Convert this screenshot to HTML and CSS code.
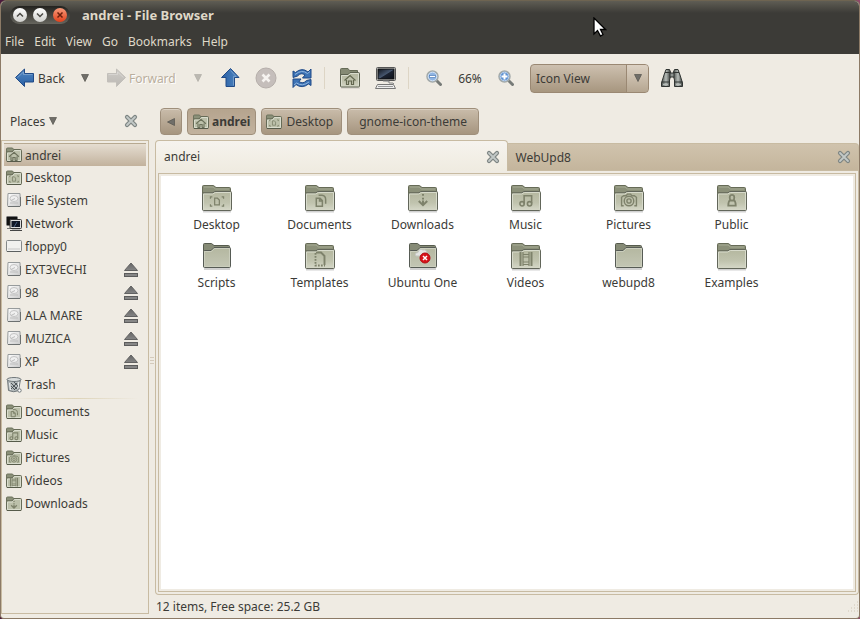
FILE: index.html
```
<!DOCTYPE html>
<html lang="en">
<head>
<meta charset="utf-8">
<title>andrei - File Browser</title>
<link rel="stylesheet" href="styles.css">
</head>
<body>
<svg class="defs" aria-hidden="true">
  <defs>
    <linearGradient id="g-front" x1="0" y1="0" x2="0" y2="1"><stop offset="0" stop-color="#b4b79f"/><stop offset=".6" stop-color="#c0c3ae"/><stop offset="1" stop-color="#d6d8c8"/></linearGradient>
    <linearGradient id="g-plain" x1="0" y1="0" x2="0" y2="1"><stop offset="0" stop-color="#b4b7a0"/><stop offset="1" stop-color="#c3c6b4"/></linearGradient>
    <linearGradient id="g-blue" x1="0" y1="0" x2="0" y2="1"><stop offset="0" stop-color="#5088c4"/><stop offset="1" stop-color="#2a5fa3"/></linearGradient>
    <linearGradient id="g-gray" x1="0" y1="0" x2="0" y2="1"><stop offset="0" stop-color="#cfccc7"/><stop offset="1" stop-color="#bbb8b4"/></linearGradient>
    <linearGradient id="g-eject" x1="0" y1="0" x2="0" y2="1"><stop offset="0" stop-color="#666"/><stop offset="1" stop-color="#858585"/></linearGradient>
    <linearGradient id="g-drive" x1="0" y1="0" x2="1" y2="1"><stop offset="0" stop-color="#fff"/><stop offset="1" stop-color="#c9c9c9"/></linearGradient>
    <linearGradient id="g-screen" x1="0" y1="0" x2="1" y2="1"><stop offset="0" stop-color="#10141c"/><stop offset=".5" stop-color="#46566e"/><stop offset=".55" stop-color="#1b2230"/><stop offset="1" stop-color="#0c1018"/></linearGradient>
    <linearGradient id="g-bino" x1="0" y1="0" x2="1" y2="0"><stop offset="0" stop-color="#4c514e"/><stop offset=".5" stop-color="#b6bcb8"/><stop offset="1" stop-color="#3a3e3c"/></linearGradient>
  </defs>
  <symbol id="folder" viewBox="0 0 32 28">
    <path d="M2 26.5h28" stroke="#000" stroke-opacity=".18" stroke-width="2"/>
    <path d="M1.500 25V1.500Q1.500.5 2.500.5H12.500L15 2.500H28.500Q29.500 2.500 29.500 3.500V8H1.500z" fill="#8b9079" stroke="#666b57"/>
    <path d="M3 2h9l2.500 2H28" fill="none" stroke="#a5aa94"/>
    <path d="M1.500 24.500V9Q1.500 8 2.500 8H11Q12 8 13 7L14 6.500H29.500Q30.500 6.500 30.500 7.500V24.500Q30.500 25.500 29.500 25.500H2.500Q1.500 25.500 1.500 24.500z" fill="url(#g-front)" stroke="#62665a"/>
    <path d="M2.500 24V9H11.500L14.500 7.500H29.500V24" fill="none" stroke="#d7dacb"/>
  </symbol>
  <symbol id="folder-plain" viewBox="0 0 32 28">
    <path d="M3 26h26" stroke="#000" stroke-opacity=".18" stroke-width="2"/>
    <path d="M2.500 24V1.500Q2.500.5 3.500.5H10.500L13 2.500H27.500Q28.500 2.500 28.500 3.500V8H2.500z" fill="#868b76" stroke="#565b4e"/>
    <path d="M2.500 23.500V8.500Q2.500 7.500 3.500 7.500H10L13 4.500H28.500Q29.500 4.500 29.500 5.500V23.500Q29.500 24.500 28.500 24.500H3.500Q2.500 24.500 2.500 23.500z" fill="url(#g-plain)" stroke="#565b55"/>
    <path d="M3.500 23.500V8.500H10.500L13.500 5.500H28.500V23.500z" fill="none" stroke="#cbcebd"/>
  </symbol>
  <symbol id="mini" viewBox="0 0 16 16">
    <path d="M.5 13V2Q.5 1 1.500 1H6.500L8 3V5H.5z" fill="#8b9079" stroke="#6d725d"/>
    <path d="M.5 13.500V6Q.5 5 1.500 5H6L8 2.500H14.500Q15.500 2.500 15.500 3.500V13.500Q15.500 14.500 14.500 14.500H1.500Q.5 14.500.5 13.500z" fill="#bcc0aa" stroke="#666b57"/>
    <path d="M1.500 13.500V6H6.500L8.500 3.500H14.500V13.500z" fill="none" stroke="#d9dccd"/>
    <path d="M1 14.500h14" stroke="#565b4a"/>
  </symbol>
  <symbol id="e-home" viewBox="0 0 16 16"><path d="M1.500 9L8 3L14.500 9M4 8.500V14H6.500V10H9.500V14H12V8.500" fill="none" stroke="#6d725c" stroke-width="1.500"/></symbol>
  <symbol id="e-desktop" viewBox="0 0 16 16"><path d="M5.500 4.500H8.500L10.500 6.500V11.500H5.500zM1 5V3H3M13 3H15V5M1 11V13H3M13 13H15V11" fill="none" stroke="#7e826b" stroke-width="1.300"/></symbol>
  <symbol id="e-docs" viewBox="0 0 16 16"><path d="M3.500 5.500H7.500L10 8V14H3.500zM6 2.500H9.500Q13.500 3 13.500 7V11.500M7 6V8.500H9.500" fill="none" stroke="#7e826b" stroke-width="1.600"/></symbol>
  <symbol id="e-down" viewBox="0 0 16 16"><path d="M8 1v2M8 5v2M8 8v4M3.500 8.500L8 13L12.500 8.500" fill="none" stroke="#7e826b" stroke-width="2.100"/></symbol>
  <symbol id="e-music" viewBox="0 0 16 16"><path d="M6 11.500V3H14V11" fill="none" stroke="#7e826b" stroke-width="1.700"/><circle cx="3.800" cy="11.500" r="2.300" fill="none" stroke="#7e826b" stroke-width="1.700"/><circle cx="11.800" cy="11.500" r="2.300" fill="none" stroke="#7e826b" stroke-width="1.700"/></symbol>
  <symbol id="e-pics" viewBox="0 0 16 16"><g fill="none" stroke="#7e826b" stroke-width="1.300"><path d="M3 13H1V5L3 3.500H5.500L6.500 2H9.500L10.500 3.500H13L15 5V13H13"/><circle cx="8" cy="8.500" r="4.500"/><circle cx="8" cy="8.500" r="2"/></g></symbol>
  <symbol id="e-public" viewBox="0 0 16 16"><path d="M6 7.500Q4.500 2 8 2Q11.500 2 10 7.500Q12 9 12 13.500H4Q4 9 6 7.500zM6 8h4" fill="none" stroke="#7e826b" stroke-width="1.900"/></symbol>
  <symbol id="e-templates" viewBox="0 0 16 16"><path d="M4 1.500H9L12.500 5V14" fill="none" stroke="#7e826b" stroke-width="1.900"/><path d="M3.500 2V14.500H13" fill="none" stroke="#7e826b" stroke-width="1.800" stroke-dasharray="1.700 1.300"/></symbol>
  <symbol id="e-videos" viewBox="0 0 16 16"><path d="M2.500 1V15M13.500 1V15" stroke="#7e826b" stroke-width="2"/><path d="M5 1V15M11 1V15M5 3.500H11M5 6H11M5 11H11M5 13.500H11" stroke="#7e826b" stroke-width="1.200"/></symbol>
  <symbol id="drive" viewBox="0 0 16 16">
    <path d="M2 .5H14L14.500 12.500Q14.500 13.500 13.500 13.500H2.500Q1.500 13.500 1.500 12.500z" fill="url(#g-drive)" stroke="#979b9c"/>
    <path d="M2 13.500H14M14.500 4V13" stroke="#6c7070"/>
    <ellipse cx="8" cy="5.500" rx="4" ry="3" fill="#f0f0f0" stroke="#c5c5c5"/><path d="M5 7.500L9 5.500M4 10H12" stroke="#bdbdbd"/>
  </symbol>
  <symbol id="floppy" viewBox="0 0 16 16"><rect x=".5" y="1.500" width="15" height="11" rx="1" fill="#f1f1ef" stroke="#85898a"/><path d="M2 10H14" stroke="#c7c7c7"/><path d="M1 12.500H15" stroke="#5c6060"/></symbol>
  <symbol id="network" viewBox="0 0 16 16"><rect x=".5" y=".5" width="11" height="9" rx="1" fill="#111" stroke="#777"/><path d="M1 12.500h6" stroke="#777"/><rect x="4" y="3.500" width="11.500" height="9" rx="1" fill="#ddd" stroke="#333"/><rect x="5.500" y="5" width="8.500" height="6" fill="#111827"/><path d="M8 11l3-5" stroke="#496080"/><path d="M4 14.500H16" stroke="#444"/><path d="M6 13.500H14" stroke="#bbb"/></symbol>
  <symbol id="trash" viewBox="0 0 16 16"><path d="M1.500 2.500L2.500 13.500Q8 16 12.500 13.500L14.500 2.500z" fill="#b4babb" stroke="#70777a"/><ellipse cx="8" cy="2.500" rx="7" ry="2" fill="#d9dddd" stroke="#70777a"/><path d="M5 6L11 12M5 9L9 13M8 5L12 9M11 6L5 12M12 9L8 13" stroke="#454c50" stroke-width=".9"/><path d="M3.500 6L4.500 13M12.800 5L12 12" stroke="#eef1f2"/><circle cx="13.500" cy="13.500" r="1.700" fill="#fff" stroke="#70777a"/></symbol>
  <symbol id="eject" viewBox="0 0 16 16"><path d="M8 1L14.500 8.500H1.500z" fill="url(#g-eject)" stroke="#626262"/><rect x="1.500" y="11.500" width="13" height="3" fill="#868686" stroke="#5c5c5c"/></symbol>
  <symbol id="cross" viewBox="0 0 14 14"><path d="M3 3L11 11M11 3L3 11" stroke="#7d8583" stroke-width="4.200" stroke-linecap="round"/><path d="M3 3L11 11M11 3L3 11" stroke="#c3c9c7" stroke-width="1.800" stroke-linecap="round"/></symbol>
  <symbol id="arrow-left" viewBox="0 0 22 22"><path d="M1.500 10.500L10.500 2V6.500H19.500V15H10.500V19.500z" stroke-linejoin="round"/><path d="M3.500 10.500L9.500 5V7.500H18.500" fill="none" stroke="#fff" stroke-opacity=".25"/></symbol>
  <symbol id="down" viewBox="0 0 10 10"><path d="M1.500 1.500H8.500L5 8.500z" fill="#706e69" stroke="#55534e" stroke-width=".7"/></symbol>
</svg>

<div class="window">
  <header class="chrome">
    <div class="titlebar">
      <div class="wm">
        <button class="orb" aria-label="Minimize"><svg viewBox="0 0 14 14"><path d="M4 8.500L7 5.500L10 8.500"/></svg></button>
        <button class="orb" aria-label="Maximize"><svg viewBox="0 0 14 14"><path d="M4 5.500L7 8.500L10 5.500"/></svg></button>
        <button class="orb orb-close" aria-label="Close"><svg viewBox="0 0 14 14"><path d="M4.500 4.500L9.500 9.500M9.500 4.500L4.500 9.500"/></svg></button>
      </div>
      <h1>andrei - File Browser</h1>
    </div>
    <nav class="menubar">
      <button>File</button><button>Edit</button><button>View</button><button>Go</button><button>Bookmarks</button><button>Help</button>
    </nav>
  </header>

  <div class="toolbar">
    <button class="tool back"><svg class="i22 blue"><use href="#arrow-left"/></svg>Back</button>
    <button class="drop" aria-label="Back history"><svg class="i10"><use href="#down"/></svg></button>
    <button class="tool forward" disabled><svg class="i22 gray"><use href="#arrow-left"/></svg><span>Forward</span></button>
    <button class="drop faded" disabled aria-label="Forward history"><svg class="i10"><use href="#down"/></svg></button>
    <button class="icon" aria-label="Up"><svg class="i22 blue turn"><use href="#arrow-left"/></svg></button>
    <button class="icon" disabled aria-label="Stop"><svg class="i22" viewBox="0 0 22 22"><circle cx="11" cy="11" r="10" fill="#c5bebb" stroke="#b5aeaa"/><path d="M7.500 7.500L14.500 14.500M14.500 7.500L7.500 14.500" stroke="#f6f3f0" stroke-width="2.600"/></svg></button>
    <button class="icon" aria-label="Reload"><svg class="i22" viewBox="0 0 22 22"><path d="M2 9.500V4L4.500 5.500Q11 0 17 5L20 2V11H11.500L14 8Q10 5 6.500 9L2 10.500z" fill="#3d73b5" stroke="#204a87"/><path d="M20 12.500V18.500L17.500 17Q11 22 5 17.500L2 20.500V12H10L8 14.500Q12 17.500 15.500 13.500z" fill="#3d73b5" stroke="#204a87"/><path d="M4 7.500Q11 2 16.500 6.500L19 4.500M18 15Q11 20 5.500 16L3 18" fill="none" stroke="#8fb4de"/></svg></button>
    <span class="sep"></span>
    <button class="icon" aria-label="Home"><svg class="i22" viewBox="0 0 22 22"><path d="M2 21h19" stroke="#000" stroke-opacity=".15"/><path d="M1.500 18V2.500Q1.500 1.500 2.500 1.500H9L10.500 3.500H18.500V8H1.500z" fill="#858a74" stroke="#666b57"/><path d="M1.500 19V7.500H9L11 5.500H19.500Q20.500 5.500 20.500 6.500V19Q20.500 20 19.500 20H2.500Q1.500 20 1.500 19z" fill="url(#g-front)" stroke="#5d6250"/><path d="M2.500 18.500V8.500H9.500L11.500 6.500H19.500V18.500" fill="none" stroke="#d9dccd"/><path d="M5.500 13.500L11 8.500L16.500 13.500M7.500 13V17.500H9.500V14H12.500V17.500H14.500V13" fill="none" stroke="#62674f" stroke-width="1.200"/></svg></button>
    <button class="icon" aria-label="Computer"><svg class="i22" viewBox="0 0 22 22"><rect x="1.500" y=".5" width="19" height="13" rx="1" fill="#e2e2df" stroke="#555"/><rect x="3" y="2" width="16" height="10" fill="url(#g-screen)" stroke="#111"/><path d="M8 14H14V16H18L19 17" fill="#ccc" stroke="#888"/><path d="M2.500 17.500H18.500L20.500 21.500H.5z" fill="#eee" stroke="#777"/><path d="M3 19.500H18" stroke="#999"/></svg></button>
    <span class="sep"></span>
    <button class="icon" aria-label="Zoom out"><svg class="i16" viewBox="0 0 16 16"><path d="M10.500 10.500L14.500 14.500" stroke="#777b78" stroke-width="3" stroke-linecap="round"/><circle cx="6.500" cy="6.500" r="5.500" fill="#8fb4e2" stroke="#a4aaa9" stroke-width="1.500"/><circle cx="6.500" cy="6.500" r="4.300" fill="none" stroke="#d4e2f3"/><rect x="3.500" y="5.500" width="6" height="2" fill="#fff" stroke="#4f7db8" stroke-width=".7"/></svg></button>
    <span class="zoom">66%</span>
    <button class="icon" aria-label="Zoom in"><svg class="i16" viewBox="0 0 16 16"><path d="M10.500 10.500L14.500 14.500" stroke="#777b78" stroke-width="3" stroke-linecap="round"/><circle cx="6.500" cy="6.500" r="5.500" fill="#5d90d0" stroke="#a4aaa9" stroke-width="1.500"/><circle cx="6.500" cy="6.500" r="4.300" fill="none" stroke="#c0d5ee"/><path d="M3.500 6.500H9.500M6.500 3.500V9.500" stroke="#fff" stroke-width="2"/></svg></button>
    <div class="combo">
      <select aria-label="View mode"><option>Icon View</option><option>List View</option><option>Compact View</option></select>
      <span class="combo-arrow"><svg class="i10"><use href="#down"/></svg></span>
    </div>
    <button class="icon" aria-label="Search"><svg class="bino" viewBox="0 0 24 20"><path d="M6 1.500H9.500L10.500 4V8.500L9.500 12V18.500H1.500V15L4 7z" fill="url(#g-bino)" stroke="#303432"/><path d="M18 1.500H14.500L13.500 4V8.500L14.500 12V18.500H22.500V15L20 7z" fill="url(#g-bino)" stroke="#303432"/><rect x="10" y="5" width="4" height="4" fill="#8d9390" stroke="#303432"/><path d="M1.500 14H9.500M14.500 14H22.500M5 4.500H10M14 4.500H19" stroke="#303432"/><path d="M3 16.500H8M16 16.500H21" stroke="#b5bab7"/></svg></button>
  </div>

  <div class="body">
    <aside class="side">
      <div class="side-head"><button class="places">Places<svg class="i10"><use href="#down"/></svg></button><button class="x" aria-label="Close side pane"><svg class="i14"><use href="#cross"/></svg></button></div>
      <ul class="list">
        <li class="sel"><a href="#"><svg class="i16" viewBox="0 0 16 16"><use href="#mini"/><use href="#e-home" x="2" y="3" width="12" height="12"/></svg>andrei</a></li>
        <li><a href="#"><svg class="i16" viewBox="0 0 16 16"><use href="#mini"/><use href="#e-desktop" x="3" y="4" width="10" height="10"/></svg>Desktop</a></li>
        <li><a href="#"><svg class="i16"><use href="#drive"/></svg>File System</a></li>
        <li><a href="#"><svg class="i16"><use href="#network"/></svg>Network</a></li>
        <li><a href="#"><svg class="i16"><use href="#floppy"/></svg>floppy0</a></li>
        <li><a href="#"><svg class="i16"><use href="#drive"/></svg>EXT3VECHI</a><button class="x" aria-label="Eject EXT3VECHI"><svg class="i16"><use href="#eject"/></svg></button></li>
        <li><a href="#"><svg class="i16"><use href="#drive"/></svg>98</a><button class="x" aria-label="Eject 98"><svg class="i16"><use href="#eject"/></svg></button></li>
        <li><a href="#"><svg class="i16"><use href="#drive"/></svg>ALA MARE</a><button class="x" aria-label="Eject ALA MARE"><svg class="i16"><use href="#eject"/></svg></button></li>
        <li><a href="#"><svg class="i16"><use href="#drive"/></svg>MUZICA</a><button class="x" aria-label="Eject MUZICA"><svg class="i16"><use href="#eject"/></svg></button></li>
        <li><a href="#"><svg class="i16"><use href="#drive"/></svg>XP</a><button class="x" aria-label="Eject XP"><svg class="i16"><use href="#eject"/></svg></button></li>
        <li><a href="#"><svg class="i16"><use href="#trash"/></svg>Trash</a></li>
        <li class="rule" role="separator"></li>
        <li><a href="#"><svg class="i16" viewBox="0 0 16 16"><use href="#mini"/><use href="#e-docs" x="3" y="4" width="10" height="10"/></svg>Documents</a></li>
        <li><a href="#"><svg class="i16" viewBox="0 0 16 16"><use href="#mini"/><use href="#e-music" x="3" y="4" width="10" height="10"/></svg>Music</a></li>
        <li><a href="#"><svg class="i16" viewBox="0 0 16 16"><use href="#mini"/><use href="#e-pics" x="3" y="4" width="10" height="10"/></svg>Pictures</a></li>
        <li><a href="#"><svg class="i16" viewBox="0 0 16 16"><use href="#mini"/><use href="#e-videos" x="3" y="4" width="10" height="10"/></svg>Videos</a></li>
        <li><a href="#"><svg class="i16" viewBox="0 0 16 16"><use href="#mini"/><use href="#e-down" x="3" y="4" width="10" height="10"/></svg>Downloads</a></li>
      </ul>
    </aside>
    <div class="splitter"><i></i><i></i><i></i></div>
    <main class="main">
      <nav class="path">
        <button class="crumb step" aria-label="Previous"><svg class="i10 point"><use href="#down"/></svg></button>
        <button class="crumb current"><svg class="i16" viewBox="0 0 16 16"><use href="#mini"/><use href="#e-home" x="2" y="3" width="12" height="12"/></svg>andrei</button>
        <button class="crumb"><svg class="i16" viewBox="0 0 16 16"><use href="#mini"/><use href="#e-desktop" x="3" y="4" width="10" height="10"/></svg><span>Desktop</span></button>
        <button class="crumb wide">gnome-icon-theme</button>
      </nav>
      <div class="tabs">
        <div class="tab on"><button class="tab-name">andrei</button><button class="x" aria-label="Close tab andrei"><svg class="i14"><use href="#cross"/></svg></button></div>
        <div class="tab"><button class="tab-name">WebUpd8</button><button class="x" aria-label="Close tab WebUpd8"><svg class="i14"><use href="#cross"/></svg></button></div>
      </div>
      <div class="frame">
        <div class="view">
          <a class="file" href="#"><svg viewBox="0 0 32 28"><use href="#folder"/><use href="#e-desktop" x="8" y="9" width="16" height="15"/></svg>Desktop</a>
          <a class="file" href="#"><svg viewBox="0 0 32 28"><use href="#folder"/><use href="#e-docs" x="9" y="8" width="15" height="15"/></svg>Documents</a>
          <a class="file" href="#"><svg viewBox="0 0 32 28"><use href="#folder"/><use href="#e-down" x="8" y="8" width="16" height="15"/></svg>Downloads</a>
          <a class="file" href="#"><svg viewBox="0 0 32 28"><use href="#folder"/><use href="#e-music" x="8" y="8" width="16" height="15"/></svg>Music</a>
          <a class="file" href="#"><svg viewBox="0 0 32 28"><use href="#folder"/><use href="#e-pics" x="7" y="7" width="18" height="17"/></svg>Pictures</a>
          <a class="file" href="#"><svg viewBox="0 0 32 28"><use href="#folder"/><use href="#e-public" x="8" y="8" width="16" height="15"/></svg>Public</a>
          <a class="file" href="#"><svg viewBox="0 0 32 28"><use href="#folder-plain"/></svg>Scripts</a>
          <a class="file" href="#"><svg viewBox="0 0 32 28"><use href="#folder"/><use href="#e-templates" x="8" y="8" width="16" height="16"/></svg>Templates</a>
          <a class="file" href="#"><svg viewBox="0 0 32 28"><use href="#folder-plain"/><path d="M9 13Q7 10 11 9.500Q12 5 16 7Q20 6 20 11V13z" fill="#e4e5e3" stroke="#c3c5c1"/><circle cx="18" cy="15" r="5" fill="#d8121a" stroke="#b20a10"/><path d="M16 13L20 17M20 13L16 17" stroke="#fff" stroke-width="1.500"/></svg>Ubuntu One</a>
          <a class="file" href="#"><svg viewBox="0 0 32 28"><use href="#folder"/><use href="#e-videos" x="8" y="8" width="16" height="16"/></svg>Videos</a>
          <a class="file" href="#"><svg viewBox="0 0 32 28"><use href="#folder-plain"/></svg>webupd8</a>
          <a class="file" href="#"><svg viewBox="0 0 32 28"><use href="#folder"/></svg>Examples</a>
        </div>
      </div>
      <footer class="status"><span>12 items, Free space: 25.2 GB</span><svg class="grip" viewBox="0 0 12 12"><path d="M10 1h1M7 4h1M10 4h1M4 7h1M7 7h1M10 7h1M1 10h1M4 10h1M7 10h1M10 10h1" stroke="#cfc5b4"/></svg></footer>
    </main>
  </div>
  <svg class="pointer" viewBox="0 0 14 20" aria-hidden="true"><path d="M1 1V17L4.500 13.500L7.500 19L10 17.500L7.500 12.500H12.500z" fill="#fff" stroke="#000" stroke-width="1.300"/></svg>
</div>
</body>
</html>
```
FILE: styles.css
```
* { box-sizing: border-box; }

body {
  margin: 0;
  background: linear-gradient(90deg, #4a1a3c, #8f4a6a);
  font: 12px/17px "Noto Sans", sans-serif;
  color: #3c3b37;
}

button, select {
  font: inherit;
  color: inherit;
  background: none;
  border: 0;
  padding: 0;
  margin: 0;
}

a { color: inherit; text-decoration: none; }
svg { display: block; flex: none; }
.defs { position: absolute; width: 0; height: 0; }

.i10 { width: 10px; height: 10px; }
.i14 { width: 14px; height: 14px; }
.i16 { width: 16px; height: 16px; }
.i22 { width: 22px; height: 22px; }
.bino { width: 24px; height: 20px; }
.blue { fill: url(#g-blue); stroke: #204a87; }
.gray { fill: url(#g-gray); stroke: #c2bfba; transform: scaleX(-1); }
.turn { transform: rotate(90deg); }

.window {
  position: relative;
  display: flex;
  flex-direction: column;
  min-height: 100vh;
  border: 1px solid #8c7a66;
  border-top-color: #6e6451;
  border-radius: 6px 6px 4px 4px;
  background: #efebe3;
  overflow: hidden;
}

.chrome {
  background: linear-gradient(#5f5d54, #3c3b37 12px);
  color: #dfd8c8;
  height: 53px;
}

.titlebar { display: flex; align-items: center; height: 28px; padding-left: 9px; }
.titlebar h1 { margin: 0 0 0 12px; font-size: 13px; font-weight: 700; }

.wm {
  display: flex;
  align-items: center;
  gap: 6px;
  height: 18px;
  padding: 0 3px;
  border-radius: 9px;
  background: linear-gradient(#23221f, #66655e);
}

.orb {
  width: 14px;
  height: 14px;
  border-radius: 50%;
  background: linear-gradient(#fff, #cfcfcc);
}
.orb svg { fill: none; stroke: #4a4945; stroke-width: 1.5px; }
.orb-close { background: linear-gradient(#f79a7a, #e2401a); }
.orb-close svg { stroke: #6b1f0c; }

.menubar { display: flex; gap: 10px; height: 25px; padding-left: 4px; }

.toolbar { display: flex; align-items: center; height: 48px; padding-left: 13px; }
.tool { display: flex; align-items: center; gap: 2px; height: 30px; }
.back { width: 56px; }
.forward { width: 78px; margin-left: 6px; color: #b9ae9d; text-shadow: 1px 1px #fff; }
.drop { display: flex; justify-content: center; width: 29px; }
.faded { opacity: .4; }
.icon { display: flex; align-items: center; justify-content: center; width: 36px; height: 30px; }
.sep { width: 1px; height: 22px; margin: 0 7px 0 4px; background: #ddd5c5; }
.zoom { width: 36px; text-align: center; }

.combo { position: relative; width: 119px; height: 29px; margin: 0 5px 0 6px; }
.combo select {
  appearance: none;
  width: 100%;
  height: 100%;
  padding-left: 5px;
  border: 1px solid #9a8873;
  border-radius: 4px;
  background: linear-gradient(#cdc0af, #a7967f);
}
.combo-arrow {
  position: absolute;
  top: 1px;
  right: 1px;
  bottom: 1px;
  display: flex;
  align-items: center;
  justify-content: center;
  width: 22px;
  border-left: 1px solid #9a8873;
  border-radius: 0 3px 3px 0;
  background: linear-gradient(#ddd2c4, #b5a691);
  pointer-events: none;
}

.body { display: flex; flex: 1; }

.side { display: flex; flex-direction: column; width: 148px; padding-bottom: 4px; }
.side-head {
  display: flex;
  align-items: center;
  justify-content: space-between;
  height: 38px;
  padding: 0 11px 0 9px;
}
.places { display: flex; align-items: center; gap: 3px; }

.list {
  flex: 1;
  margin: 0;
  padding: 2px;
  list-style: none;
  border: 1px solid #c8bba2;
}
.list li { display: flex; align-items: center; height: 23px; padding: 0 7px 0 2px; }
.list a { display: flex; flex: 1; align-items: center; gap: 3px; }
.list .sel { border-top: 1px solid #b7a991; background: linear-gradient(#e5ddd1, #c2b29d); }
.list .rule { height: 4px; background: linear-gradient(90deg, #efebe3, #ddd3b8, #efebe3) center / 90% 1px no-repeat; }

.splitter {
  display: flex;
  flex-direction: column;
  align-items: center;
  justify-content: center;
  gap: 2px;
  width: 6px;
}
.splitter i { width: 4px; height: 1px; background: #d4cabb; }

.main { display: flex; flex: 1; flex-direction: column; min-width: 0; }

.path { display: flex; gap: 5px; height: 38px; padding: 6px 5px 5px; }
.crumb {
  display: flex;
  align-items: center;
  justify-content: center;
  gap: 4px;
  padding: 0 8px 0 4px;
  border: 1px solid #9f8f7b;
  border-radius: 4px;
  background: linear-gradient(#c9bcaa, #a6957f);
  box-shadow: inset 0 1px #d9cfc1;
}
.step { width: 22px; padding: 0; }
.point { transform: rotate(90deg); }
.current { gap: 3px; padding: 0 5px; font-weight: 700; background: linear-gradient(#b5a48e, #c2b29e); box-shadow: none; }
.wide { padding: 0 11px; }

.tabs { display: flex; align-items: flex-end; height: 31px; }
.tab {
  display: flex;
  flex: 1;
  align-items: center;
  height: 28px;
  padding: 0 7px 0 8px;
  border: 1px solid #c8bba2;
  border-left: 0;
  border-radius: 0 4px 0 0;
  background: linear-gradient(#d0c3ad, #c4b59c);
}
.tab.on {
  height: 31px;
  padding: 1px 7px 0 8px;
  border: 1px solid #c8bba2;
  border-bottom: 0;
  border-radius: 4px 4px 0 0;
  background: linear-gradient(#f6f3ee, #efebe0);
}
.tab-name { flex: 1; text-align: left; }

.frame {
  display: flex;
  flex: 1;
  padding: 2px;
  border: 1px solid #c8bba2;
  border-top: 0;
  border-radius: 0 0 4px 4px;
}

.view {
  display: grid;
  flex: 1;
  grid-template-columns: repeat(auto-fill, 103px);
  align-content: start;
  row-gap: 10px;
  padding: 11px 0 11px 6px;
  border: 1px solid #c8bba2;
  box-shadow: inset 0 0 0 2px #efebe3;
  background: #fff;
}
.file { display: flex; flex-direction: column; align-items: center; gap: 3px; }
.file svg { width: 32px; height: 28px; }

.status { display: flex; align-items: center; justify-content: space-between; height: 23px; padding-left: 1px; }
.grip { width: 12px; height: 12px; }

.pointer { position: absolute; top: 16px; left: 592px; width: 14px; height: 20px; }
```
